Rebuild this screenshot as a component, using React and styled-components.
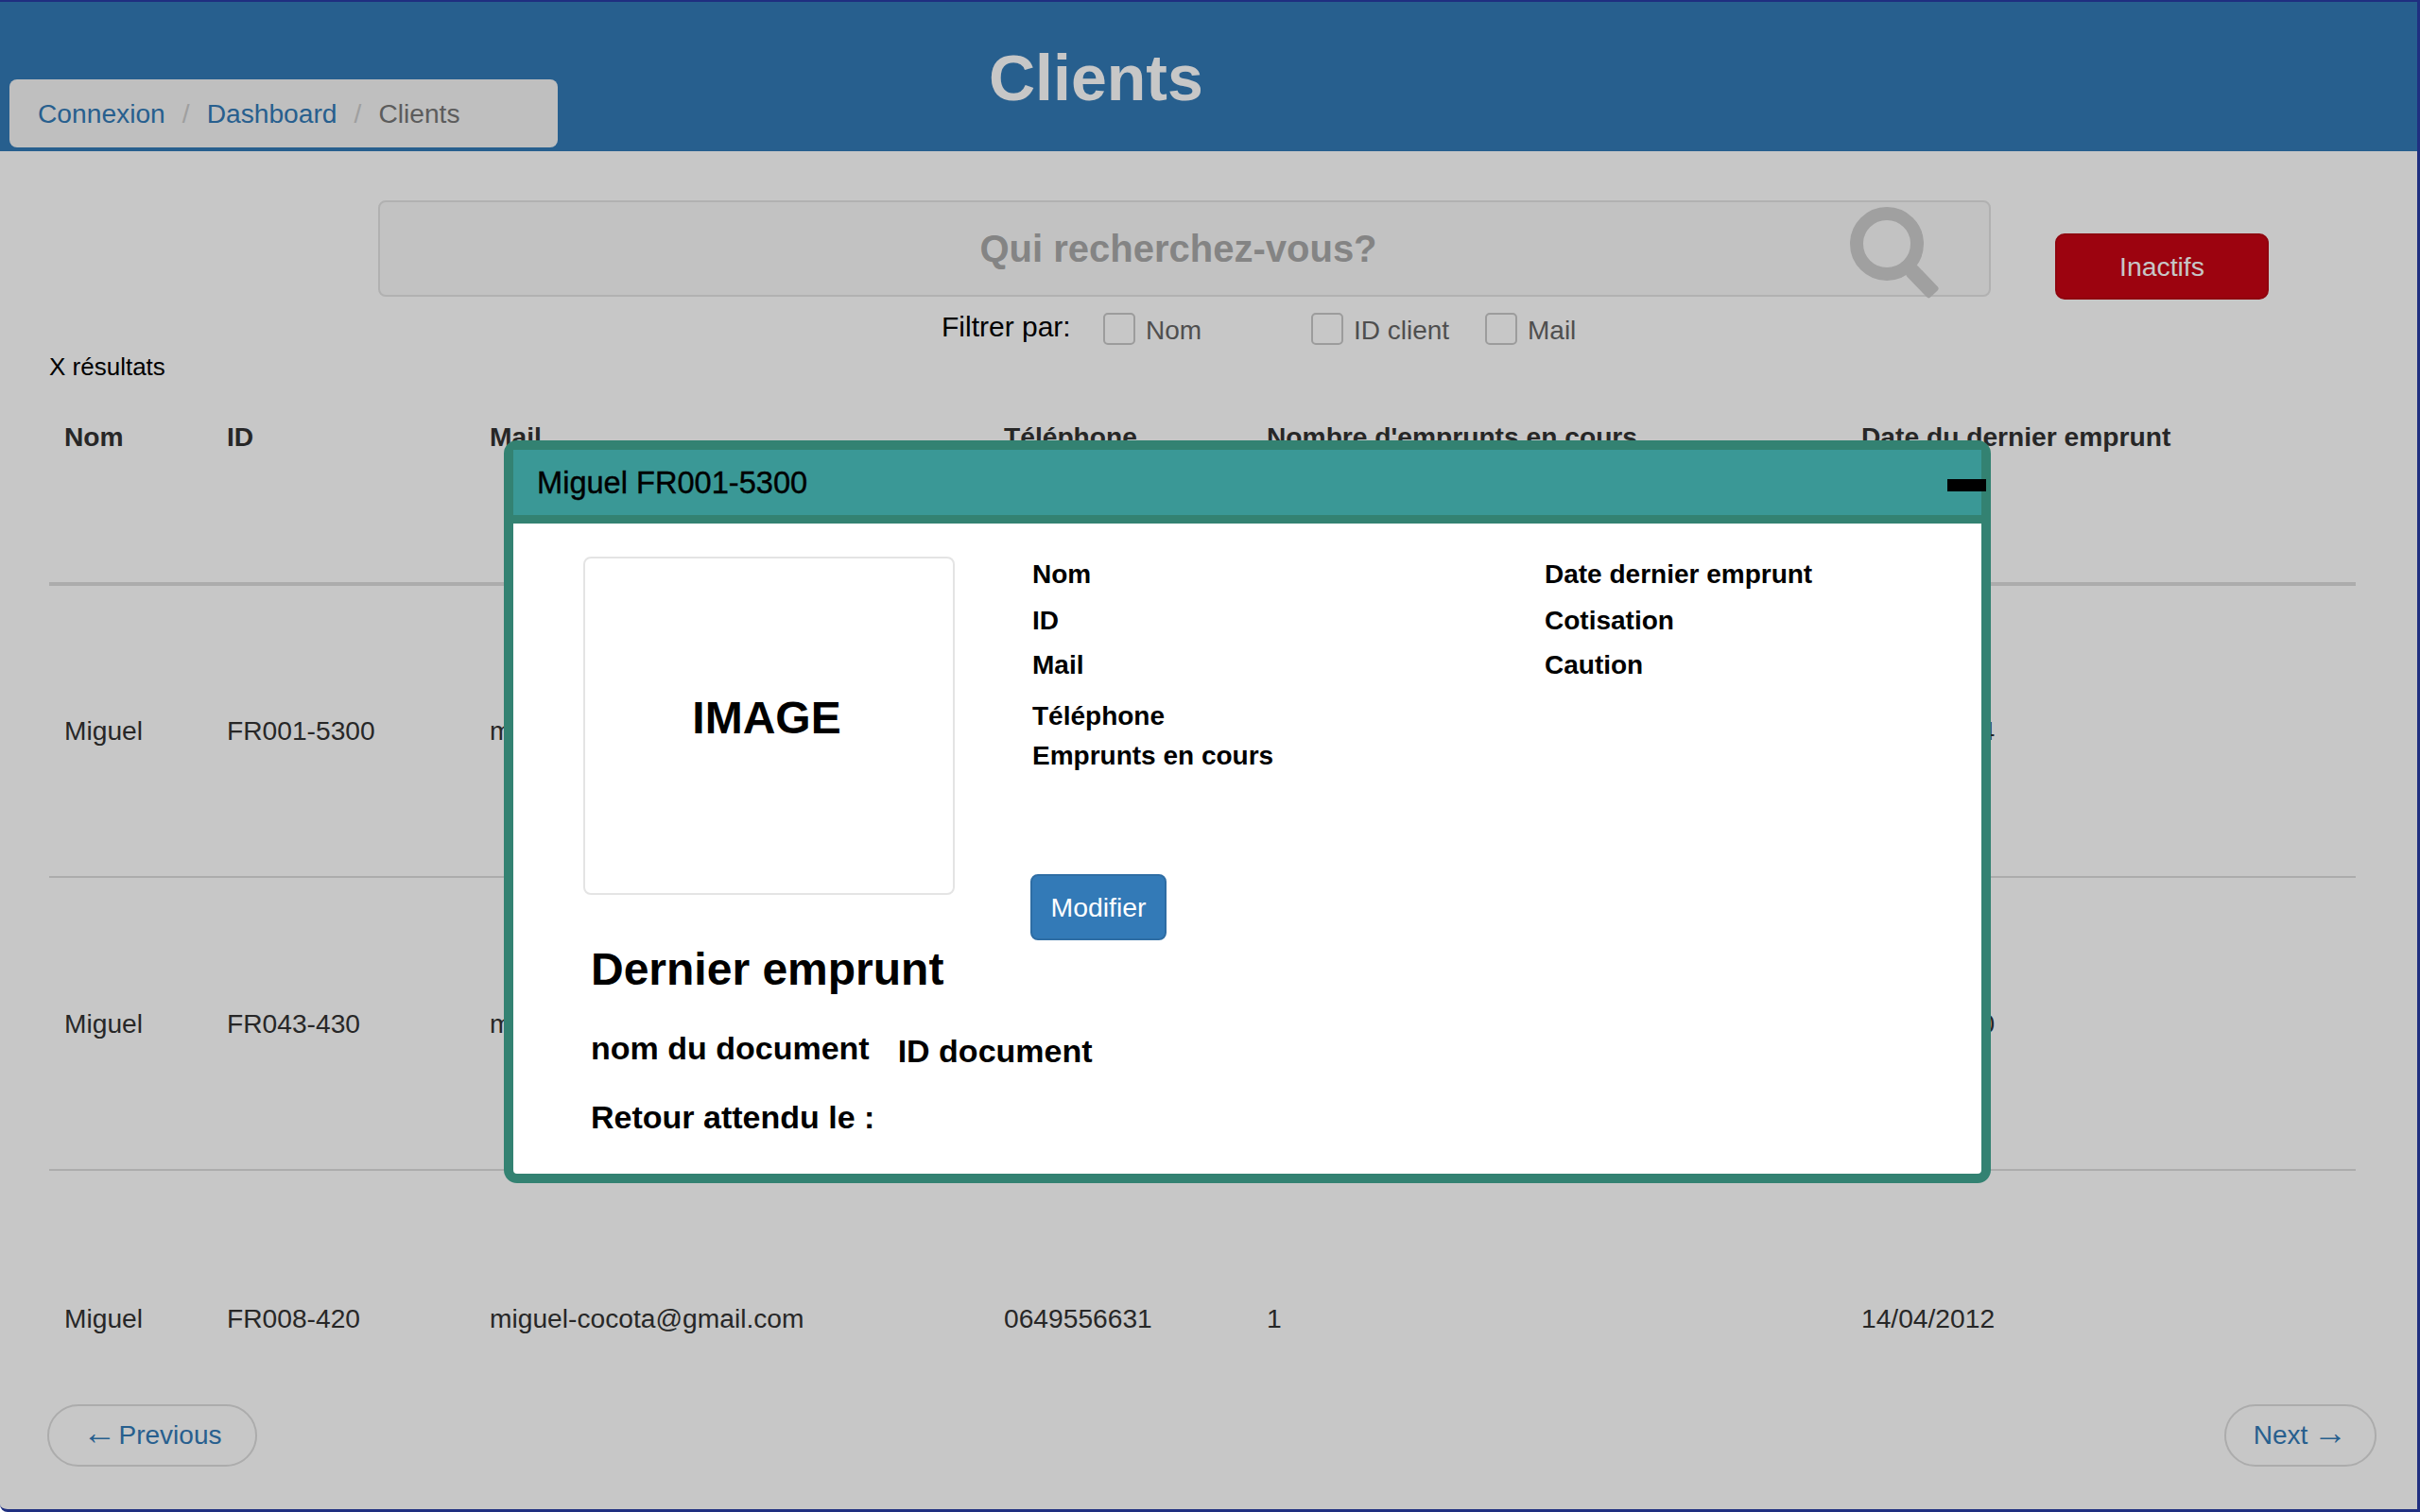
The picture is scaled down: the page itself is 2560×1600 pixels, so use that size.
import React from 'react';
import styled, { createGlobalStyle } from 'styled-components';

const GlobalStyle = createGlobalStyle`
  html, body {
    margin: 0;
    padding: 0;
    background: #fff;
    font-family: "Liberation Sans", Arial, sans-serif;
    color: #333;
  }
  * { box-sizing: border-box; }
`;

const Page = styled.div`
  position: relative;
  width: 2560px;
  height: 1600px;
  overflow: hidden;
  background: #fff;
`;

const Header = styled.header`
  display: flex;
  height: 160px;
  background: #337ab7;
  border-top: 2px solid #283ba4;
  padding-left: 10px;
`;

const Breadcrumb = styled.nav`
  display: flex;
  align-items: center;
  width: 580px;
  height: 72px;
  margin-top: 82px;
  padding-left: 30px;
  background: #f5f5f5;
  border-radius: 8px;
  font-size: 28.2px;
`;

const Crumb = styled.a`
  color: #337ab7;
`;

const CurrentCrumb = styled.span`
  color: #777;
`;

const Slash = styled.span`
  color: #ccc;
  padding: 0 18px;
`;

const Title = styled.h1`
  margin: 40px 0 0 456px;
  font-size: 68px;
  line-height: 80px;
  font-weight: 700;
  color: #fff;
`;

const SearchRow = styled.div`
  display: flex;
  align-items: flex-start;
  margin-top: 52px;
  padding-left: 400px;
`;

const SearchBox = styled.div`
  position: relative;
  width: 1706px;
  height: 102px;
  padding-right: 13px;
  background: #f9f9f9;
  border: 2px solid #e3e3e3;
  border-radius: 8px;
  display: flex;
  align-items: center;
  justify-content: center;
  font-size: 40px;
  font-weight: 700;
  color: #a9a9a9;
`;

const SearchIcon = styled.svg`
  position: absolute;
  left: 1555px;
  top: 4px;
  width: 98px;
  height: 98px;
`;

const InactiveButton = styled.button`
  width: 226px;
  height: 70px;
  margin: 35px 0 0 68px;
  padding: 0;
  background: #c80514;
  border: 2px solid #b80612;
  border-radius: 10px;
  color: #fff;
  font-family: inherit;
  font-size: 28.4px;
`;

const FilterRow = styled.div`
  display: flex;
  align-items: center;
  height: 40px;
  margin-top: 11px;
  padding-left: 996px;
  font-size: 28px;
`;

const FilterLabel = styled.span`
  color: #000;
  width: 171px;
  font-size: 30px;
  position: relative;
  top: -2px;
`;

const FilterOption = styled.label`
  display: flex;
  align-items: center;
  gap: 11px;
  width: ${(p) => p.$width}px;
  color: #666;
`;

const OptionText = styled.span`
  position: relative;
  top: 2px;
`;

const Check = styled.input.attrs({ type: 'checkbox' })`
  appearance: none;
  width: 34px;
  height: 34px;
  margin: 0;
  background: #fff;
  border: 2px solid #c8c8c8;
  border-radius: 5px;
`;

const Results = styled.p`
  margin: 2px 0 0 52px;
  font-size: 26px;
  line-height: 36px;
  color: #000;
`;

const Table = styled.table`
  width: 2440px;
  margin: 32px 0 0 52px;
  border-collapse: collapse;
  table-layout: fixed;
  font-size: 28.2px;
`;

const HeadCell = styled.th`
  width: ${(p) => p.$width}px;
  height: 180px;
  padding: 8px 16px 0;
  vertical-align: top;
  text-align: left;
  font-weight: 700;
  border-bottom: 4px solid #ddd;
`;

const Row = styled.tr`
  height: 310px;
  border-bottom: 2px solid #ddd;
  &:last-child {
    height: 228px;
    border-bottom: 0;
  }
`;

const Cell = styled.td`
  padding: 0 16px;
  vertical-align: middle;
  tr:last-child > & {
    vertical-align: top;
    padding-top: 140px;
  }
`;

const Pager = styled.div`
  display: flex;
  justify-content: space-between;
  margin-top: 20px;
  padding: 0 46px 0 50px;
`;

const PagerLink = styled.a`
  display: flex;
  align-items: center;
  justify-content: center;
  gap: ${(p) => p.$gap}px;
  width: ${(p) => p.$width}px;
  height: 66px;
  border: 2px solid #ddd;
  border-radius: 33px;
  font-size: 28px;
  color: #337ab7;
`;

const Arrow = styled.span`
  position: relative;
  top: -3px;
  font-size: 36px;
  line-height: 1;
`;

const Backdrop = styled.div`
  position: absolute;
  inset: 0;
  background: rgba(0, 0, 0, 0.22);
  border-style: solid;
  border-color: #1f2f80;
  border-width: 0 3px 3px 0;
  border-bottom-left-radius: 8px;
`;

const Modal = styled.section`
  position: absolute;
  left: 533px;
  top: 466px;
  width: 1573px;
  height: 786px;
  background: #fff;
  border: 10px solid #338272;
  border-radius: 14px;
`;

const ModalHeader = styled.div`
  position: relative;
  display: flex;
  align-items: center;
  height: 78px;
  padding-left: 25px;
  background: #3a9896;
  border-bottom: 9px solid #338272;
  font-size: 32.6px;
  color: #000;
  -webkit-text-stroke: 0.4px #000;
`;

const CloseBar = styled.span`
  position: absolute;
  right: -5px;
  top: 31px;
  width: 41px;
  height: 13px;
  background: #000;
`;

const ModalBody = styled.div`
  padding: 35px 0 0 74px;
  color: #000;
`;

const TopRow = styled.div`
  display: flex;
  align-items: flex-start;
`;

const ImageBox = styled.div`
  display: flex;
  align-items: center;
  justify-content: center;
  width: 393px;
  height: 358px;
  padding: 0 5px 18px 0;
  border: 2px solid #e4e4e4;
  border-radius: 8px;
  font-size: 48px;
  font-weight: 700;
`;

const Details = styled.div`
  margin-left: 82px;
`;

const DetailColumns = styled.div`
  display: grid;
  grid-template-columns: 542px 400px;
  padding-top: 1px;
`;

const DetailList = styled.div`
  display: flex;
  flex-direction: column;
`;

const DetailLabel = styled.span`
  height: ${(p) => p.$height}px;
  font-size: 28px;
  line-height: 36px;
  font-weight: 700;
`;

const EditButton = styled.button`
  display: block;
  width: 144px;
  height: 70px;
  margin: 107px 0 0 -2px;
  padding: 0;
  background: #337ab7;
  border: 2px solid #2e6da4;
  border-radius: 8px;
  color: #fff;
  font-family: inherit;
  font-size: 28.4px;
`;

const Loan = styled.div`
  margin: 1px 0 0 8px;
`;

const LoanTitle = styled.h2`
  margin: 0;
  font-size: 48px;
  line-height: 60px;
  font-weight: 700;
`;

const LoanLine = styled.div`
  display: flex;
  margin-top: ${(p) => p.$top}px;
  font-size: 34px;
  line-height: 40px;
  font-weight: 700;
`;

const LoanId = styled.span`
  margin-left: 30px;
  position: relative;
  top: 3px;
`;

const columns = [
  { label: 'Nom', width: 172 },
  { label: 'ID', width: 278 },
  { label: 'Mail', width: 544 },
  { label: 'Téléphone', width: 278 },
  { label: "Nombre d'emprunts en cours", width: 629 },
  { label: 'Date du dernier emprunt', width: 539 },
];

const clients = [
  ['Miguel', 'FR001-5300', 'miguel-cocota@gmail.com', '0649556631', '1', '14/04/2014'],
  ['Miguel', 'FR043-430', 'miguel-cocota@gmail.com', '0649556631', '1', '14/04/2010'],
  ['Miguel', 'FR008-420', 'miguel-cocota@gmail.com', '0649556631', '1', '14/04/2012'],
];

const App = () => (
  <Page>
    <GlobalStyle />
    <Header>
      <Breadcrumb>
        <Crumb>Connexion</Crumb>
        <Slash>/</Slash>
        <Crumb>Dashboard</Crumb>
        <Slash>/</Slash>
        <CurrentCrumb>Clients</CurrentCrumb>
      </Breadcrumb>
      <Title>Clients</Title>
    </Header>

    <SearchRow>
      <SearchBox>
        Qui recherchez-vous?
        <SearchIcon viewBox="0 0 98 98">
          <circle cx="39" cy="40" r="32" fill="none" stroke="#cdcdcd" strokeWidth="14" />
          <rect x="0" y="-8" width="36" height="16" rx="3" fill="#cdcdcd" transform="translate(64 67) rotate(46)" />
        </SearchIcon>
      </SearchBox>
      <InactiveButton>Inactifs</InactiveButton>
    </SearchRow>

    <FilterRow>
      <FilterLabel>Filtrer par:</FilterLabel>
      <FilterOption $width={220}><Check /><OptionText>Nom</OptionText></FilterOption>
      <FilterOption $width={184}><Check /><OptionText>ID client</OptionText></FilterOption>
      <FilterOption $width={120}><Check /><OptionText>Mail</OptionText></FilterOption>
    </FilterRow>

    <Results>X résultats</Results>

    <Table>
      <thead>
        <tr>
          {columns.map((c) => (
            <HeadCell key={c.label} $width={c.width}>{c.label}</HeadCell>
          ))}
        </tr>
      </thead>
      <tbody>
        {clients.map((client) => (
          <Row key={client[1]}>
            {client.map((value, i) => (
              <Cell key={i}>{value}</Cell>
            ))}
          </Row>
        ))}
      </tbody>
    </Table>

    <Pager>
      <PagerLink $width={222} $gap={2}><Arrow>←</Arrow>Previous</PagerLink>
      <PagerLink $width={161} $gap={6}>Next<Arrow>→</Arrow></PagerLink>
    </Pager>

    <Backdrop>
      <Modal>
        <ModalHeader>
          Miguel FR001-5300
          <CloseBar />
        </ModalHeader>
        <ModalBody>
          <TopRow>
            <ImageBox>IMAGE</ImageBox>
            <Details>
              <DetailColumns>
                <DetailList>
                  <DetailLabel $height={49}>Nom</DetailLabel>
                  <DetailLabel $height={47}>ID</DetailLabel>
                  <DetailLabel $height={54}>Mail</DetailLabel>
                  <DetailLabel $height={42}>Téléphone</DetailLabel>
                  <DetailLabel $height={36}>Emprunts en cours</DetailLabel>
                </DetailList>
                <DetailList>
                  <DetailLabel $height={49}>Date dernier emprunt</DetailLabel>
                  <DetailLabel $height={47}>Cotisation</DetailLabel>
                  <DetailLabel $height={54}>Caution</DetailLabel>
                </DetailList>
              </DetailColumns>
              <EditButton>Modifier</EditButton>
            </Details>
          </TopRow>
          <Loan>
            <LoanTitle>Dernier emprunt</LoanTitle>
            <LoanLine $top={33}>
              nom du document
              <LoanId>ID document</LoanId>
            </LoanLine>
            <LoanLine $top={33}>Retour attendu le :</LoanLine>
          </Loan>
        </ModalBody>
      </Modal>
    </Backdrop>
  </Page>
);

export default App;
